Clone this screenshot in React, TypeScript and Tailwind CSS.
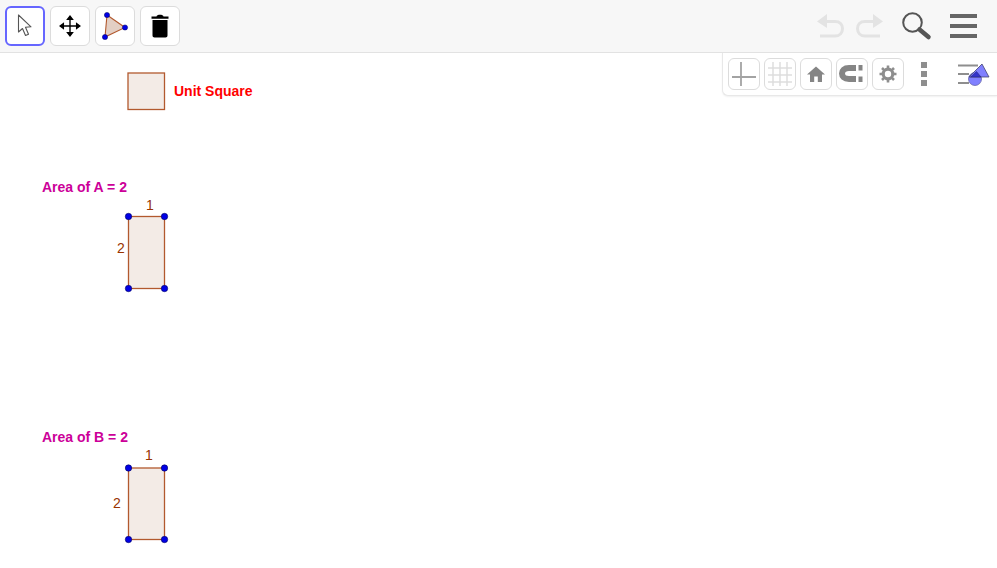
import type { ReactNode } from "react";

function ToolButton({ active, children }: { active?: boolean; children: ReactNode }) {
  return (
    <button
      className={
        active
          ? "w-10 h-10 rounded-md bg-white border-2 border-[#6666ff] flex items-center justify-center"
          : "w-10 h-10 rounded-md bg-white border border-[#dcdcdc] flex items-center justify-center"
      }
    >
      {children}
    </button>
  );
}

function StyleButton({ children }: { children: ReactNode }) {
  return (
    <button className="w-8 h-8 rounded-md bg-white border border-[#dcdcdc] flex items-center justify-center">
      {children}
    </button>
  );
}

function Pt({ x, y }: { x: number; y: number }) {
  return <circle cx={x} cy={y} r="3.2" fill="#0000e6" stroke="#00005a" strokeWidth="0.6" />;
}

// rectangle with its four corner points, h is the side length on the canvas
function Rect2({ top, h, soft }: { top: number; h: number; soft?: boolean }) {
  const y = soft ? 7 : 6.5;
  return (
    <svg className="absolute left-[122px]" style={{ top: top - 6 }} width="48" height={h + 12}>
      <rect x="6.5" y={y} width="36" height={h + 6.5 - y} fill="#f3ebe6" stroke="#b2592e" strokeWidth="1.3" />
      <Pt x={6.5} y={y} />
      <Pt x={42.5} y={y} />
      <Pt x={6.5} y={h + 6.5} />
      <Pt x={42.5} y={h + 6.5} />
    </svg>
  );
}

export default function App() {
  return (
    <div className="relative w-[997px] h-[568px] bg-white overflow-hidden antialiased font-['Liberation_Sans',Arial,sans-serif]">
      {/* Top toolbar */}
      <div className="h-[53px] bg-[#f7f7f7] border-b border-[#e2e2e2] flex items-start justify-between pl-[5px] pt-[6px]">
        <div className="flex gap-[5px]">
          <ToolButton active>
            <svg width="20" height="26" viewBox="0 0 20 26">
              <path d="M3.5 2 L3.5 19 L7.500 15.500 L10.500 22.500 L13.500 21.200 L10.500 14.300 L16 13.800 Z" fill="#fff" stroke="#555" strokeWidth="1.100" strokeLinejoin="round" />
            </svg>
          </ToolButton>
          <ToolButton>
            <svg width="22" height="22" viewBox="0 0 24 24">
              <path d="M12 3v18M3 12h18" stroke="#000" strokeWidth="1.500" />
              <path d="M12 0l4.200 5.500H7.800zM12 24l4.200-5.500H7.800zM0 12l5.500-4.200v8.400zM24 12l-5.500-4.200v8.400z" fill="#000" />
            </svg>
          </ToolButton>
          <ToolButton>
            <svg width="30" height="32" viewBox="0 0 30 32">
              <path d="M7 5 L25 17.500 L5 27 Z" fill="#e3cfc4" stroke="#b2592e" strokeWidth="1.100" />
              <circle cx="7" cy="5" r="2.600" fill="#0000e6" stroke="#00005a" strokeWidth="0.500" />
              <circle cx="25" cy="17.500" r="2.600" fill="#0000e6" stroke="#00005a" strokeWidth="0.500" />
              <circle cx="5" cy="27" r="2.600" fill="#0000e6" stroke="#00005a" strokeWidth="0.500" />
            </svg>
          </ToolButton>
          <ToolButton>
            <svg width="20" height="26" viewBox="0 0 20 26">
              <path d="M1.500 3.500h17v2.300h-17zM6.500 3.500c0-2.300 7-2.300 7 0z" fill="#000" />
              <path d="M2.500 7h15v15.500c0 1.300-.8 2-2 2h-11c-1.200 0-2-.7-2-2z" fill="#000" />
            </svg>
          </ToolButton>
        </div>
        <div className="flex items-center mr-[20px] mt-[5px]">
          <svg width="30" height="26" viewBox="0 0 30 26" className="mr-[8px]">
            <path d="M11 1 L1 8.500 L11 15 Z" fill="#e3e3e3" />
            <path d="M9 8.500h10c5 0 7.500 3 7.500 7s-2.500 7.500-7.500 7.500H4" fill="none" stroke="#e3e3e3" strokeWidth="3" />
          </svg>
          <svg width="30" height="26" viewBox="0 0 30 26" className="mr-[17px]">
            <path d="M19 1 L29 8.500 L19 15 Z" fill="#e3e3e3" />
            <path d="M21 8.500H11c-5 0-7.500 3-7.500 7s2.500 7.500 7.500 7.500h15" fill="none" stroke="#e3e3e3" strokeWidth="3" />
          </svg>
          <svg width="31" height="30" viewBox="0 0 31 30" className="mr-[18px]">
            <circle cx="11.500" cy="11.500" r="9.300" fill="none" stroke="#555" strokeWidth="2" />
            <path d="M18.500 18.500 L27.500 26" stroke="#555" strokeWidth="4.500" strokeLinecap="round" />
          </svg>
          <div className="w-[27px] flex flex-col gap-[6px]">
            <div className="h-1 bg-[#666]" />
            <div className="h-1 bg-[#666]" />
            <div className="h-1 bg-[#666]" />
          </div>
        </div>
      </div>

      {/* Graphics style bar, lies over the canvas */}
      <div className="absolute left-[722px] top-[53px] w-[275px] h-[43px] bg-white border-l border-b border-[#e8e8e8] rounded-bl-md shadow-[0_1px_2px_rgba(0,0,0,0.06)] flex items-start pl-[5px] pt-[5px]">
        <div className="flex gap-1">
          <StyleButton>
            <svg width="26" height="26" viewBox="0 0 26 26">
              <path d="M1 16h24M10 1v24" stroke="#a3a3a3" strokeWidth="1.800" />
            </svg>
          </StyleButton>
          <StyleButton>
            <svg width="26" height="26" viewBox="0 0 26 26">
              <path d="M1 7h24M1 14h24M1 21h24M6 1v24M13 1v24M20 1v24" stroke="#dedede" strokeWidth="1.500" />
            </svg>
          </StyleButton>
          <StyleButton>
            <svg width="18" height="16" viewBox="0 0 18 16">
              <path d="M9 0.500 L18 8.500 H15 V16 H10.800 V10.500 H7.200 V16 H3 V8.500 H0 Z" fill="#858585" />
            </svg>
          </StyleButton>
          <StyleButton>
            <svg width="26" height="20" viewBox="0 0 26 20">
              <path d="M17 4H10c-5 0-7 2.500-7 5.500s2 5.500 7 5.500h7" fill="none" stroke="#858585" strokeWidth="6" />
              <path d="M19.500 1h4v5.500h-4zM19.500 12.500h4V18h-4z" fill="#858585" />
            </svg>
          </StyleButton>
          <StyleButton>
            <svg width="18" height="18" viewBox="0 0 18 18">
              <circle cx="9" cy="9" r="4.800" fill="none" stroke="#8e8e8e" strokeWidth="3.200" />
              <path d="M9 0.500v4M9 13.500v4M0.500 9h4M13.500 9h4M3 3l2.800 2.800M12.200 12.200L15 15M15 3l-2.800 2.800M5.800 12.200L3 15" stroke="#8e8e8e" strokeWidth="2.600" />
            </svg>
          </StyleButton>
        </div>
        <div className="ml-[17px] mt-[4px] flex flex-col gap-[3px]">
          <div className="w-[6px] h-[6px] bg-[#8e8e8e]" />
          <div className="w-[6px] h-[6px] bg-[#8e8e8e]" />
          <div className="w-[6px] h-[6px] bg-[#8e8e8e]" />
        </div>
        <svg width="32" height="26" viewBox="0 0 32 26" className="ml-[31px] mt-[3px]">
          <path d="M0 4.500h20M0 13h11M0 22h11" stroke="#8e8e8e" strokeWidth="1.800" />
          <circle cx="17" cy="18" r="6.500" fill="#8080ff" stroke="#5a5aa0" strokeWidth="0.700" />
          <path d="M24 3 L31 16 H11 Z" fill="#8080ff" stroke="#44446e" strokeWidth="0.800" />
          <path d="M18.500 10.500 L23 16 H12.500 Z" fill="#3333cc" stroke="#222266" strokeWidth="0.500" />
        </svg>
      </div>

      {/* Canvas objects */}
      <svg className="absolute left-[127px] top-[72px]" width="39" height="39">
        <rect x="1" y="1" width="36.500" height="36.500" fill="#f3ebe6" stroke="#b2592e" strokeWidth="1.300" />
      </svg>
      <span className="absolute left-[174px] top-[83px] text-[14px] leading-4 font-bold text-[#ff0000]">Unit Square</span>

      <span className="absolute left-[42px] top-[179px] text-[14px] leading-4 font-bold text-[#cc0099]">Area of A = 2</span>
      <span className="absolute left-[146px] top-[197px] text-[14px] leading-4 text-[#993300]">1</span>
      <span className="absolute left-[117px] top-[240px] text-[14px] leading-4 text-[#993300]">2</span>
      <Rect2 top={216} h={72} />

      <span className="absolute left-[42px] top-[429px] text-[14px] leading-4 font-bold text-[#cc0099]">Area of B = 2</span>
      <span className="absolute left-[145px] top-[447px] text-[14px] leading-4 text-[#993300]">1</span>
      <span className="absolute left-[113px] top-[495px] text-[14px] leading-4 text-[#993300]">2</span>
      <Rect2 top={467} h={72} soft />
    </div>
  );
}
